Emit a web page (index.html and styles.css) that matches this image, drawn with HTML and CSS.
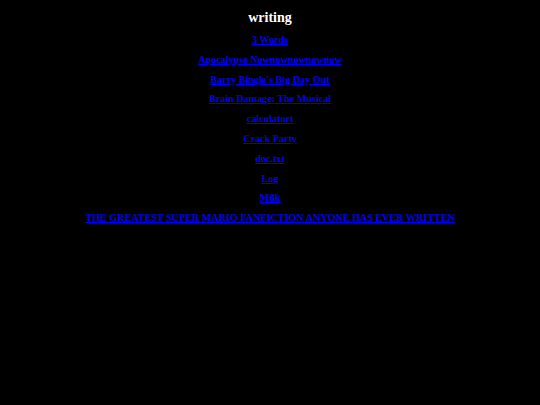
FILE: index.html
```html
<!DOCTYPE html>
<html>
<head>
<meta charset="utf-8">
<link rel="stylesheet" href="styles.css">
</head>
<body>
<div class="page">
  <h1 class="title">writing</h1>
  <ul class="links">
    <li><a href="#">3 Words</a></li>
    <li><a href="#">Apocalypse Nownownownownow</a></li>
    <li><a href="#">Barry Bingle's Big Day Out</a></li>
    <li><a href="#">Brain Damage: The Musical</a></li>
    <li><a href="#">calculatort</a></li>
    <li><a href="#">Crack Party</a></li>
    <li><a href="#">doc.txt</a></li>
    <li><a href="#">Log</a></li>
    <li><a href="#">Milk</a></li>
    <li><a href="#">THE GREATEST SUPER MARIO FANFICTION ANYONE HAS EVER WRITTEN</a></li>
  </ul>
</div>
</body>
</html>
```
FILE: styles.css
```css
html, body {
  margin: 0;
  padding: 0;
  background: #000;
}
body {
  width: 540px;
  height: 405px;
  font-family: "Liberation Serif", "Times New Roman", serif;
  font-weight: bold;
}
.page {
  padding-top: 8px;
  text-align: center;
}
.title {
  margin: 0 0 2px;
  font-size: 14px;
  line-height: 20px;
  color: #fff;
}
.links {
  list-style: none;
  margin: 0;
  padding: 0;
}
.links li {
  font-size: 10.15px;
  line-height: 19.8px;
}
.links a {
  color: #0000ee;
  text-decoration: underline;
}
```
